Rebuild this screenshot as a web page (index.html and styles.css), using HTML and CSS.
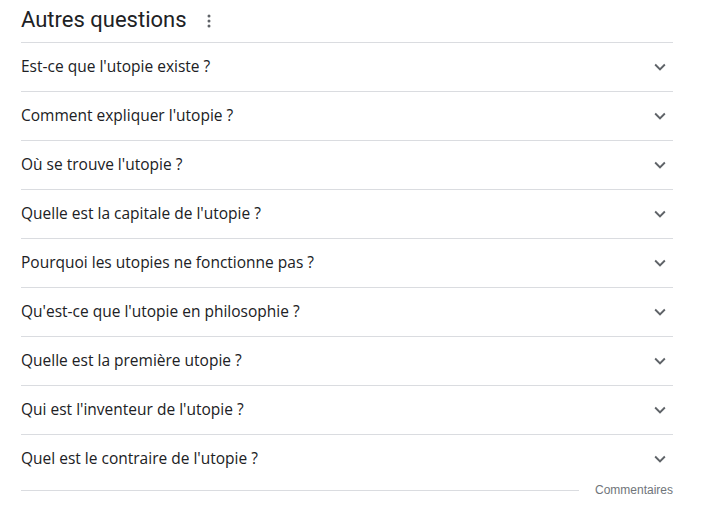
FILE: index.html
```html
<!DOCTYPE html>
<html lang="fr">
<head>
<meta charset="utf-8">
<link rel="stylesheet" href="styles.css">
</head>
<body>
<div class="panel">
  <div class="header">
    <h2 class="title">Autres questions</h2>
    <svg class="dots" width="4" height="14" viewBox="0 0 4 14"><circle cx="2" cy="2" r="1.5"/><circle cx="2" cy="7" r="1.5"/><circle cx="2" cy="12" r="1.5"/></svg>
  </div>
  <div class="list">
    <div class="row"><span class="q">Est-ce que l'utopie existe ?</span><svg class="chev" viewBox="0 0 24 24"><path d="M7.41 8.59 12 13.17l4.59-4.58L18 10l-6 6-6-6z"/></svg></div>
    <div class="row"><span class="q">Comment expliquer l'utopie ?</span><svg class="chev" viewBox="0 0 24 24"><path d="M7.41 8.59 12 13.17l4.59-4.58L18 10l-6 6-6-6z"/></svg></div>
    <div class="row"><span class="q">Où se trouve l'utopie ?</span><svg class="chev" viewBox="0 0 24 24"><path d="M7.41 8.59 12 13.17l4.59-4.58L18 10l-6 6-6-6z"/></svg></div>
    <div class="row"><span class="q">Quelle est la capitale de l'utopie ?</span><svg class="chev" viewBox="0 0 24 24"><path d="M7.41 8.59 12 13.17l4.59-4.58L18 10l-6 6-6-6z"/></svg></div>
    <div class="row"><span class="q">Pourquoi les utopies ne fonctionne pas ?</span><svg class="chev" viewBox="0 0 24 24"><path d="M7.41 8.59 12 13.17l4.59-4.58L18 10l-6 6-6-6z"/></svg></div>
    <div class="row"><span class="q">Qu'est-ce que l'utopie en philosophie ?</span><svg class="chev" viewBox="0 0 24 24"><path d="M7.41 8.59 12 13.17l4.59-4.58L18 10l-6 6-6-6z"/></svg></div>
    <div class="row"><span class="q">Quelle est la première utopie ?</span><svg class="chev" viewBox="0 0 24 24"><path d="M7.41 8.59 12 13.17l4.59-4.58L18 10l-6 6-6-6z"/></svg></div>
    <div class="row"><span class="q">Qui est l'inventeur de l'utopie ?</span><svg class="chev" viewBox="0 0 24 24"><path d="M7.41 8.59 12 13.17l4.59-4.58L18 10l-6 6-6-6z"/></svg></div>
    <div class="row last"><span class="q">Quel est le contraire de l'utopie ?</span><svg class="chev" viewBox="0 0 24 24"><path d="M7.41 8.59 12 13.17l4.59-4.58L18 10l-6 6-6-6z"/></svg></div>
  </div>
  <div class="feedback">
    <div class="fline"></div>
    <span class="ftext">Commentaires</span>
  </div>
</div>
</body>
</html>
```
FILE: styles.css
```css
html, body {
  margin: 0;
  padding: 0;
  background: #fff;
}
body {
  font-family: Roboto, "Liberation Sans", Arial, sans-serif;
  color: #202124;
}
.panel {
  width: 652px;
  margin-left: 21px;
}
.header {
  height: 42px;
  display: flex;
  align-items: center;
  gap: 20px;
}
.title {
  margin: 0;
  font-weight: 400;
  font-size: 22px;
  line-height: 28px;
  color: #202124;
  padding-bottom: 2px;
}
.dots {
  fill: #5f6368;
}
.list {
  border-top: 1px solid #dadce0;
}
.row {
  height: 48px;
  border-bottom: 1px solid #dadce0;
  display: flex;
  align-items: center;
  justify-content: space-between;
}
.row.last {
  border-bottom: none;
}
.q {
  font-family: "Open Sans", Roboto, sans-serif;
  font-size: 15.5px;
  line-height: 20px;
  padding-bottom: 2px;
  color: #202124;
}
.chev {
  width: 22px;
  height: 22px;
  fill: #5f6368;
  margin-right: 2px;
}
.feedback {
  height: 14px;
  display: flex;
  align-items: center;
  gap: 16px;
}
.fline {
  flex: 1;
  height: 1px;
  background: #dadce0;
}
.ftext {
  font-size: 12px;
  color: #70757a;
  font-family: "Liberation Sans", Arial, sans-serif;
}
```
